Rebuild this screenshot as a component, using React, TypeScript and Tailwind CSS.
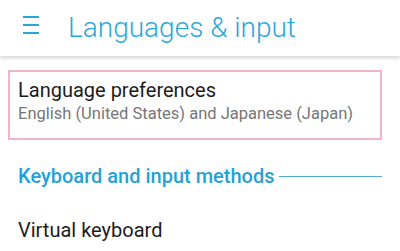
export default function App() {
  return (
    <div className="w-[400px] h-[251px] overflow-hidden bg-white font-['Roboto',sans-serif]">
      <header className="relative z-10 h-[56px] flex items-center pb-[1px] bg-white shadow-[0_2px_4px_rgba(0,0,0,0.18)]">
        <div className="ml-[23px] mb-[6px] w-[16px] flex flex-col gap-[6px]">
          <span className="block h-[2px] bg-[#2aa7d9]" />
          <span className="block h-[2px] bg-[#2aa7d9]" />
          <span className="block h-[2px] bg-[#2aa7d9]" />
        </div>
        <h1 className="ml-[29px] text-[28px] leading-[29px] font-light text-[#2ba8da]">
          Languages &amp; input
        </h1>
      </header>

      <div className="pl-[8px] pr-[18px] pt-[14px]">
        <div className="h-[70px] border-2 border-[#f4b3cb] pl-[8px] pt-[5px]">
          <div className="text-[20px] leading-[26px] text-[#1c1c1c]">
            Language preferences
          </div>
          <div className="text-[16.5px] leading-[22px] text-[#767676]">
            English (United States) and Japanese (Japan)
          </div>
        </div>
      </div>

      <div className="mt-[23px] pl-[18px] pr-[18px] flex items-center gap-[5px]">
        <span className="text-[20px] leading-[26px] font-medium text-[#1fa2d8] whitespace-nowrap">
          Keyboard and input methods
        </span>
        <span className="flex-1 h-[1px] bg-[#4eaccd]" />
      </div>

      <div className="mt-[28px] pl-[18px] text-[20px] leading-[26px] text-[#1c1c1c]">
        Virtual keyboard
      </div>
    </div>
  );
}
